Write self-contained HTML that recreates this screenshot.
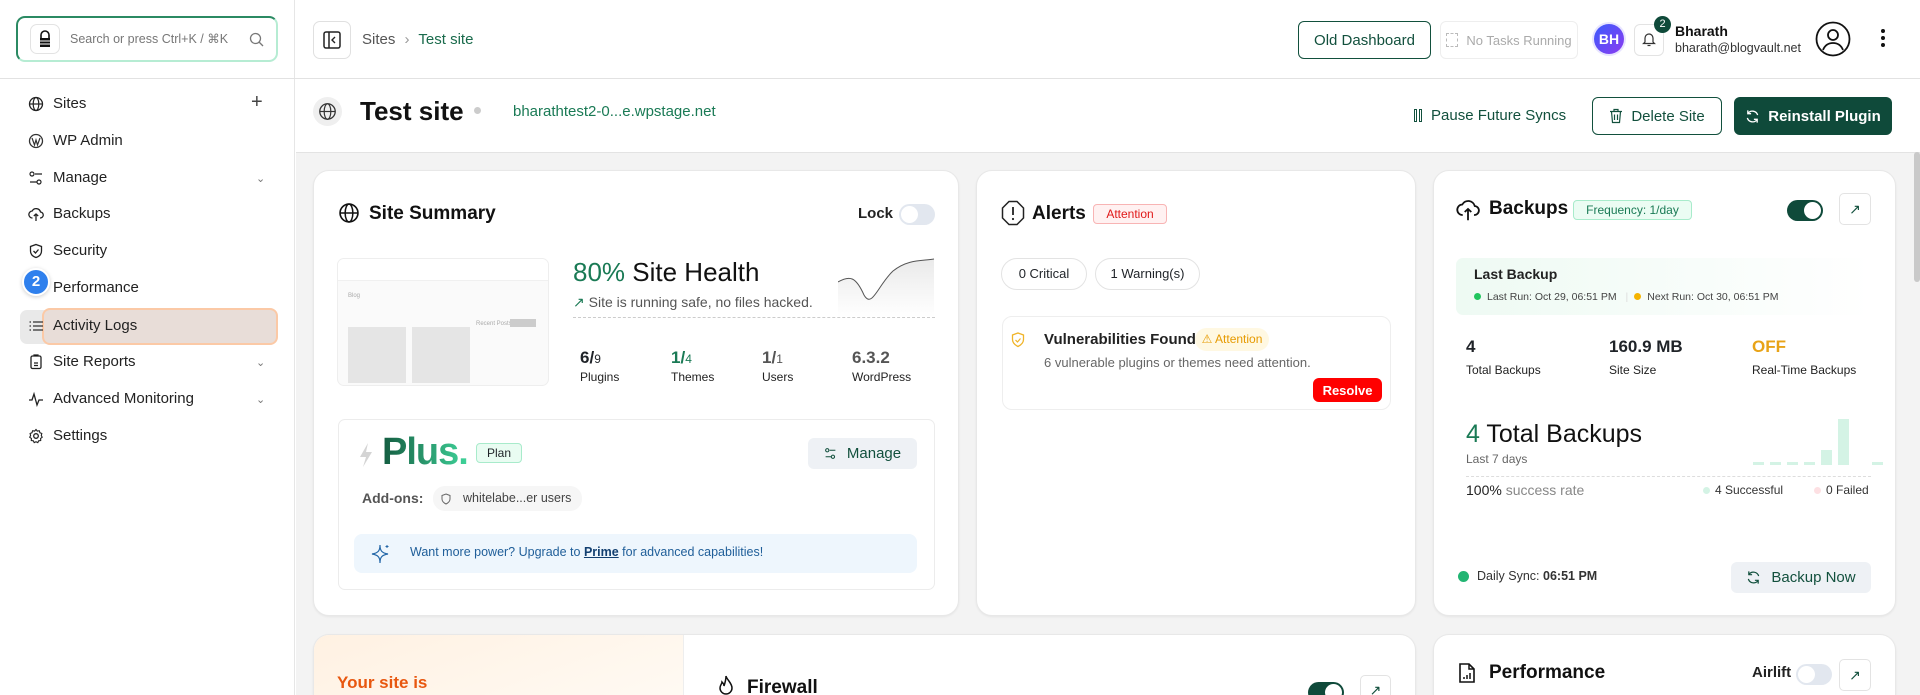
<!DOCTYPE html>
<html><head><meta charset="utf-8"><style>
*{box-sizing:border-box;margin:0;padding:0}
html,body{width:1920px;height:695px;overflow:hidden}
body{font-family:"Liberation Sans",sans-serif;color:#1f2328;background:#fff;position:relative}
.a{position:absolute}
svg{display:block}
.side{left:0;top:0;width:295px;height:695px;border-right:1px solid #e6e6e6;background:#fff}
.nav{position:absolute;left:28px;font-size:15px;color:#222;display:flex;align-items:center;gap:9px}
.nav svg{width:16px;height:16px}
.chev{position:absolute;left:256px;font-size:11px;color:#777}
.card{position:absolute;background:#fff;border:1px solid #e8e8e8;border-radius:16px;box-shadow:0 1px 2px rgba(0,0,0,.06)}
.btn{position:absolute;display:flex;align-items:center;justify-content:center;border-radius:6px;font-size:15px}
.tog{position:absolute;border-radius:12px}
.tog i{position:absolute;top:3px;width:16px;height:16px;border-radius:50%;background:#fff}
.lab{font-size:12px;color:#222}
</style></head><body>

<div class="a side"></div>
<div class="a" style="left:16px;top:16px;width:262px;height:46px;border-radius:9px;border:2px solid;border-color:#2b8a63 #b6ecd3 #b6ecd3 #2b8a63;background:#fff"></div>
<div class="a" style="left:30px;top:24px;width:30px;height:30px;border:1px solid #e3e3e3;border-radius:7px;background:#fff"></div>
<svg class="a" style="left:37px;top:30px" width="16" height="18" viewBox="0 0 16 18"><path d="M4 8V5a4 4 0 018 0v3" fill="none" stroke="#111" stroke-width="1.6"/><rect x="3" y="8" width="10" height="9" fill="#111"/><path d="M3 11h10M3 14h10" stroke="#fff" stroke-width="1"/></svg>
<div class="a" style="left:70px;top:31px;font-size:12.5px;color:#777">Search or press Ctrl+K / ⌘K</div>
<svg class="a" style="left:249px;top:32px" width="15" height="15" viewBox="0 0 15 15"><circle cx="6.5" cy="6.5" r="5" fill="none" stroke="#777" stroke-width="1.3"/><path d="M10 10l4 4" stroke="#777" stroke-width="1.3"/></svg>
<div class="a" style="left:0;top:78px;width:295px;height:1px;background:#e2e2e2"></div>

<div class="nav" style="top:95px"><svg viewBox="0 0 16 16"><circle cx="8" cy="8" r="6.5" fill="none" stroke="#222" stroke-width="1.3"/><ellipse cx="8" cy="8" rx="2.8" ry="6.5" fill="none" stroke="#222" stroke-width="1.2"/><path d="M1.5 8h13" stroke="#222" stroke-width="1.2"/></svg>Sites</div>
<div class="a" style="left:251px;top:91px;font-size:20px;color:#444">+</div>
<div class="nav" style="top:132px"><svg viewBox="0 0 16 16"><circle cx="8" cy="8" r="6.5" fill="none" stroke="#333" stroke-width="1.3"/><path d="M4 5l2.5 7L8 7l1.5 5L12 5" fill="none" stroke="#333" stroke-width="1.2"/></svg>WP Admin</div>
<div class="nav" style="top:169px"><svg viewBox="0 0 16 16"><circle cx="4" cy="4" r="2" fill="none" stroke="#222" stroke-width="1.2"/><circle cx="11" cy="12" r="2" fill="none" stroke="#222" stroke-width="1.2"/><path d="M7 4h7M2 12h7" stroke="#222" stroke-width="1.2"/></svg>Manage</div>
<div class="chev" style="top:172px">⌄</div>
<div class="nav" style="top:205px"><svg viewBox="0 0 16 16"><path d="M4.5 12a3.5 3.5 0 01-.3-7A4.5 4.5 0 0112.5 6a3 3 0 01-.5 6" fill="none" stroke="#222" stroke-width="1.3"/><path d="M8 8v7M5.8 10L8 8l2.2 2" fill="none" stroke="#222" stroke-width="1.3"/></svg>Backups</div>
<div class="nav" style="top:242px"><svg viewBox="0 0 16 16"><path d="M8 1.5l5.5 2v4.5c0 3.5-2.5 5.5-5.5 6.5C5 13.5 2.5 11.5 2.5 8V3.5z" fill="none" stroke="#222" stroke-width="1.3"/><path d="M5.5 8l2 2 3-3.5" fill="none" stroke="#222" stroke-width="1.3"/></svg>Security</div>
<div class="nav" style="top:279px"><svg viewBox="0 0 16 16"></svg>Performance</div>
<div class="a" style="left:20px;top:310px;width:256px;height:34px;border-radius:7px;background:#e9e9e9"></div>
<div class="a" style="left:42px;top:308px;width:236px;height:37px;border-radius:8px;border:2px solid #fbc9a6;background:#e8ddd8"></div>
<div class="nav" style="top:317px"><svg viewBox="0 0 16 16"><path d="M5 4h10M5 8h10M5 12h10" stroke="#333" stroke-width="1.3"/><path d="M1.5 4h1.5M1.5 8h1.5M1.5 12h1.5" stroke="#333" stroke-width="1.3"/></svg>Activity Logs</div>
<div class="a" style="left:22px;top:268px;width:28px;height:28px;border-radius:50%;background:#2f80ed;color:#fff;font-size:15px;font-weight:bold;text-align:center;line-height:24px;border:2px solid #fff;box-shadow:0 1px 4px rgba(0,0,0,.2)">2</div>
<div class="nav" style="top:353px"><svg viewBox="0 0 16 16"><rect x="3" y="2" width="10" height="12.5" rx="1.5" fill="none" stroke="#222" stroke-width="1.3"/><path d="M6 2V1h4v1M6 9h4M6 11.5h4" stroke="#222" stroke-width="1.2"/></svg>Site Reports</div>
<div class="chev" style="top:356px">⌄</div>
<div class="nav" style="top:390px"><svg viewBox="0 0 16 16"><path d="M1 9h3l2-6 3 11 2-5h4" fill="none" stroke="#222" stroke-width="1.3"/></svg>Advanced Monitoring</div>
<div class="chev" style="top:393px">⌄</div>
<div class="nav" style="top:427px"><svg viewBox="0 0 16 16"><circle cx="8" cy="8" r="2.3" fill="none" stroke="#222" stroke-width="1.3"/><path d="M8 1.5l1.3 1.6 2-.4.6 2 1.9.8-.5 2 .9 1.7-1.6 1.3.1 2-2 .3-.9 1.8-1.8-.9-1.8.9-.9-1.8-2-.3.1-2L1.7 9.2l.9-1.7-.5-2 1.9-.8.6-2 2 .4z" fill="none" stroke="#222" stroke-width="1.1"/></svg>Settings</div>

<div class="a" style="left:295px;top:78px;width:1625px;height:1px;background:#e2e2e2"></div>
<div class="a" style="left:313px;top:21px;width:38px;height:38px;border:1px solid #e0e0e0;border-radius:7px;background:#fff"></div>
<svg class="a" style="left:323px;top:31px" width="18" height="18" viewBox="0 0 18 18"><rect x="1" y="1" width="16" height="16" rx="2" fill="none" stroke="#222" stroke-width="1.5"/><path d="M6 1v16" stroke="#222" stroke-width="1.5"/><path d="M12 6l-3 3 3 3" fill="none" stroke="#222" stroke-width="1.4"/></svg>
<div class="a" style="left:362px;top:31px;font-size:15px;color:#555">Sites <span style="color:#999;margin:0 5px">›</span> <span style="color:#1a6b4c">Test site</span></div>

<div class="btn" style="left:1298px;top:21px;width:133px;height:38px;border:1.5px solid #12503d;color:#12503d">Old Dashboard</div>
<div class="btn" style="left:1440px;top:21px;width:138px;height:38px;border:1px solid #eee;color:#aaa;font-size:13px;gap:8px"><span style="width:12px;height:14px;border:1px dashed #bbb;display:inline-block"></span>No Tasks Running</div>
<div class="a" style="left:1594px;top:24px;width:30px;height:30px;border-radius:50%;background:linear-gradient(135deg,#3b5bfd,#8b3cf0);color:#fff;font-size:14px;font-weight:bold;text-align:center;line-height:30px;box-shadow:0 0 0 2px #e7e4ff">BH</div>
<div class="a" style="left:1634px;top:24px;width:30px;height:32px;border:1px solid #e3e3e3;border-radius:6px"></div>
<svg class="a" style="left:1642px;top:31px" width="14" height="16" viewBox="0 0 14 16"><path d="M3 11V7a4 4 0 018 0v4l1.5 1.5h-11z" fill="none" stroke="#333" stroke-width="1.2"/><path d="M5.5 14.5h3" stroke="#333" stroke-width="1.2"/></svg>
<div class="a" style="left:1654px;top:16px;width:17px;height:17px;border-radius:50%;background:#0f4a3a;color:#fff;font-size:11px;text-align:center;line-height:17px">2</div>
<div class="a" style="left:1675px;top:23px;font-size:14px;font-weight:bold;color:#111">Bharath</div>
<div class="a" style="left:1675px;top:41px;font-size:12.5px;color:#333">bharath@blogvault.net</div>
<svg class="a" style="left:1815px;top:21px" width="36" height="36" viewBox="0 0 36 36"><circle cx="18" cy="18" r="16.5" fill="none" stroke="#111" stroke-width="1.8"/><circle cx="18" cy="14" r="5" fill="none" stroke="#111" stroke-width="1.8"/><path d="M8 29c2-5 6-7 10-7s8 2 10 7" fill="none" stroke="#111" stroke-width="1.8"/></svg>
<div class="a" style="left:1881px;top:29px;width:4px;height:4px;border-radius:50%;background:#111;box-shadow:0 7px 0 #111,0 14px 0 #111"></div>

<div class="a" style="left:313px;top:97px;width:29px;height:29px;border-radius:50%;background:#efefef"></div>
<svg class="a" style="left:318px;top:102px" width="19" height="19" viewBox="0 0 16 16"><circle cx="8" cy="8" r="6.5" fill="none" stroke="#333" stroke-width="1.1"/><ellipse cx="8" cy="8" rx="2.8" ry="6.5" fill="none" stroke="#333" stroke-width="1"/><path d="M1.5 8h13" stroke="#333" stroke-width="1"/></svg>
<div class="a" style="left:360px;top:96px;font-size:26px;font-weight:bold;color:#111">Test site</div>
<div class="a" style="left:474px;top:107px;width:7px;height:7px;border-radius:50%;background:#ccc"></div>
<div class="a" style="left:513px;top:103px;font-size:15px;color:#1a7a55">bharathtest2-0...e.wpstage.net</div>
<div class="a" style="left:1414px;top:109px;width:3px;height:13px;border:1px solid #12503d"></div>
<div class="a" style="left:1419px;top:109px;width:3px;height:13px;border:1px solid #12503d"></div>
<div class="a" style="left:1431px;top:107px;font-size:15px;color:#12503d">Pause Future Syncs</div>
<div class="btn" style="left:1592px;top:97px;width:130px;height:38px;border:1.5px solid #12503d;color:#12503d;gap:8px"><svg width="14" height="16" viewBox="0 0 14 16"><path d="M1 3.5h12M5 3.5V1.5h4v2M2.5 3.5l1 11h7l1-11M5.5 6.5v5.5M8.5 6.5v5.5" fill="none" stroke="#12503d" stroke-width="1.2"/></svg>Delete Site</div>
<div class="btn" style="left:1734px;top:97px;width:158px;height:38px;background:#0f4a3a;color:#fff;font-weight:bold;gap:8px"><svg width="15" height="15" viewBox="0 0 16 16"><path d="M13.5 6.5A5.8 5.8 0 003 5M2.5 9.5A5.8 5.8 0 0013 11" fill="none" stroke="#fff" stroke-width="1.4"/><path d="M3 1.5V5h3.5M13 14.5V11H9.5" fill="none" stroke="#fff" stroke-width="1.4"/></svg>Reinstall Plugin</div>

<div class="a" style="left:296px;top:152px;width:1624px;height:543px;background:#f3f3f3;border-top:1px solid #e3e3e3"></div>
<div class="a" style="left:1914px;top:152px;width:6px;height:130px;background:#c9c9c9;border-radius:3px"></div>

<div class="card" style="left:313px;top:170px;width:646px;height:446px"></div>
<svg class="a" style="left:338px;top:202px" width="22" height="22" viewBox="0 0 16 16"><circle cx="8" cy="8" r="6.5" fill="none" stroke="#111" stroke-width="1.2"/><ellipse cx="8" cy="8" rx="2.8" ry="6.5" fill="none" stroke="#111" stroke-width="1.1"/><path d="M1.5 8h13" stroke="#111" stroke-width="1.1"/></svg>
<div class="a" style="left:369px;top:203px;font-size:19px;font-weight:bold;color:#111">Site Summary</div>
<div class="a" style="left:858px;top:205px;font-size:15px;font-weight:bold;color:#222">Lock</div>
<div class="tog" style="left:899px;top:204px;width:36px;height:21px;background:#e2e7ef;border-radius:11px"><i style="left:2px;top:2px;width:17px;height:17px"></i></div>
<div class="a" style="left:337px;top:258px;width:212px;height:128px;border:1px solid #eee;border-radius:7px;background:#fafafa;overflow:hidden">
 <div style="height:22px;background:#fff;border-bottom:1px solid #f0f0f0"></div>
 <div style="position:absolute;left:10px;top:34px;font-size:6px;color:#aaa">Blog</div>
 <div style="position:absolute;left:10px;top:68px;width:58px;height:56px;background:#e5e5e5"></div>
 <div style="position:absolute;left:74px;top:68px;width:58px;height:56px;background:#e5e5e5"></div>
 <div style="position:absolute;left:138px;top:62px;font-size:6px;color:#aaa;width:70px">Recent Posts</div>
 <div style="position:absolute;left:172px;top:60px;width:26px;height:8px;background:#ccc"></div>
</div>
<div class="a" style="left:573px;top:257px;font-size:26px;color:#111"><span style="color:#1a7a55">80%</span> Site Health</div>
<div class="a" style="left:573px;top:294px;font-size:14px;color:#555"><span style="color:#1a7a55">↗</span> Site is running safe, no files hacked.</div>
<svg class="a" style="left:838px;top:257px" width="97" height="60" viewBox="0 0 97 60"><defs><linearGradient id="g1" x1="0" y1="0" x2="0" y2="1"><stop offset="0" stop-color="#eaeaea"/><stop offset="1" stop-color="#fff"/></linearGradient></defs><path d="M0 25C12 18 18 20 26 38C34 52 40 28 55 14C70 2 84 4 96 2V60H0z" fill="url(#g1)"/><path d="M0 25C12 18 18 20 26 38C34 52 40 28 55 14C70 2 84 4 96 2" fill="none" stroke="#555" stroke-width="1"/></svg>
<div class="a" style="left:573px;top:317px;width:362px;border-top:1px dashed #ccc"></div>
<div class="a" style="left:580px;top:348px;font-size:17px;font-weight:bold">6/<span style="font-size:12px;font-weight:normal">9</span></div>
<div class="a" style="left:580px;top:368px"><span class="lab">Plugins</span></div>
<div class="a" style="left:671px;top:348px;font-size:17px;font-weight:bold;color:#1a7a55">1/<span style="font-size:12px;font-weight:normal">4</span></div>
<div class="a" style="left:671px;top:368px"><span class="lab">Themes</span></div>
<div class="a" style="left:762px;top:348px;font-size:17px;font-weight:bold;color:#555">1/<span style="font-size:12px;font-weight:normal">1</span></div>
<div class="a" style="left:762px;top:368px"><span class="lab">Users</span></div>
<div class="a" style="left:852px;top:348px;font-size:17px;font-weight:bold;color:#555">6.3.2</div>
<div class="a" style="left:852px;top:368px"><span class="lab">WordPress</span></div>

<div class="a" style="left:338px;top:419px;width:597px;height:171px;border:1px solid #ececec;border-radius:7px"></div>
<svg class="a" style="left:358px;top:442px" width="16" height="26" viewBox="0 0 16 26"><path d="M10 1L2 15h6l-3 10 9-15H8z" fill="#d4d4d4"/></svg>
<div class="a" style="left:382px;top:431px;font-size:38px;font-weight:bold;background:linear-gradient(90deg,#145c40,#3fd49a);-webkit-background-clip:text;color:transparent;letter-spacing:-1px">Plus.</div>
<div class="a" style="left:476px;top:443px;width:46px;height:20px;border:1px solid #a8ebcb;background:#e9fcf2;border-radius:4px;font-size:12px;text-align:center;line-height:18px">Plan</div>
<div class="btn" style="left:808px;top:438px;width:109px;height:31px;background:#eef1f5;color:#12503d;gap:10px"><svg width="13" height="13" viewBox="0 0 16 16"><circle cx="4" cy="4" r="2" fill="none" stroke="#12503d" stroke-width="1.3"/><circle cx="11" cy="12" r="2" fill="none" stroke="#12503d" stroke-width="1.3"/><path d="M7 4h7M2 12h7" stroke="#12503d" stroke-width="1.3"/></svg>Manage</div>
<div class="a" style="left:362px;top:490px;font-size:14px;font-weight:bold;color:#555">Add-ons:</div>
<div class="a" style="left:433px;top:486px;width:149px;height:25px;background:#f6f6f6;border-radius:12px;font-size:12.5px;color:#444;line-height:25px;padding-left:30px">whitelabe...er users</div>
<svg class="a" style="left:441px;top:493px" width="10" height="12" viewBox="0 0 10 12"><path d="M5 1l4 1.5v3.5c0 2.5-2 4-4 5C3 10 1 8.5 1 6V2.5z" fill="none" stroke="#666"/></svg>
<div class="a" style="left:354px;top:534px;width:563px;height:39px;background:#eef6fd;border-radius:8px"></div>
<svg class="a" style="left:370px;top:543px" width="22" height="22" viewBox="0 0 22 22"><path d="M10 2C10 8 8 10 2 11c6 1 8 3 8 9 0-6 2-8 8-9-6-1-8-3-8-9z" fill="none" stroke="#2467a8" stroke-width="1.2"/><path d="M17 2v3M15.5 3.5h3" stroke="#2467a8"/></svg>
<div class="a" style="left:410px;top:545px;font-size:12.5px;color:#1f5e99">Want more power? Upgrade to <b style="text-decoration:underline;color:#123f70">Prime</b> for advanced capabilities!</div>

<div class="card" style="left:976px;top:170px;width:440px;height:446px"></div>
<svg class="a" style="left:1001px;top:200px" width="24" height="26" viewBox="0 0 24 26"><path d="M8 1.5h8l6.5 6.5v10L16 24.5H8L1.5 18V8z" fill="none" stroke="#222" stroke-width="1.5"/><path d="M12 7v8" stroke="#222" stroke-width="1.8"/><circle cx="12" cy="19" r="1.1" fill="#222"/></svg>
<div class="a" style="left:1032px;top:203px;font-size:19px;font-weight:bold;color:#111">Alerts</div>
<div class="a" style="left:1093px;top:204px;width:74px;height:20px;border:1px solid #f8b4b4;background:#fff1f1;border-radius:4px;font-size:12px;color:#e01919;text-align:center;line-height:18px">Attention</div>
<div class="a" style="left:1001px;top:258px;width:86px;height:32px;border:1px solid #e3e3e3;border-radius:16px;font-size:13px;text-align:center;line-height:30px">0 Critical</div>
<div class="a" style="left:1095px;top:258px;width:105px;height:32px;border:1px solid #e3e3e3;border-radius:16px;font-size:13px;text-align:center;line-height:30px">1 Warning(s)</div>
<div class="a" style="left:1002px;top:316px;width:389px;height:94px;border:1px solid #eee;border-radius:10px"></div>
<svg class="a" style="left:1011px;top:332px" width="14" height="16" viewBox="0 0 14 16"><path d="M7 1l5.5 2v4.5c0 3.5-2.5 5.5-5.5 7C4 13 1.5 11 1.5 7.5V3z" fill="none" stroke="#f0b429" stroke-width="1.3"/><path d="M4.5 8l2 2 3-3.5" fill="none" stroke="#f0b429" stroke-width="1.2"/></svg>
<div class="a" style="left:1044px;top:331px;font-size:15px;font-weight:bold;color:#222">Vulnerabilities Found</div>
<div class="a" style="left:1195px;top:328px;width:74px;height:23px;background:#fff8e2;border-radius:12px;font-size:12px;color:#e69a00;text-align:center;line-height:23px">⚠ Attention</div>
<div class="a" style="left:1044px;top:355px;font-size:13px;color:#666">6 vulnerable plugins or themes need attention.</div>
<div class="btn" style="left:1313px;top:378px;width:69px;height:24px;background:#f00;color:#fff;font-size:13px;font-weight:bold">Resolve</div>

<div class="card" style="left:1433px;top:170px;width:463px;height:446px"></div>
<svg class="a" style="left:1456px;top:197px" width="24" height="24" viewBox="0 0 16 16"><path d="M4.5 12a3.5 3.5 0 01-.3-7A4.5 4.5 0 0112.5 6a3 3 0 01-.5 6" fill="none" stroke="#111" stroke-width="1.2"/><path d="M8 8v7.5M5.8 10L8 8l2.2 2" fill="none" stroke="#111" stroke-width="1.2"/></svg>
<div class="a" style="left:1489px;top:198px;font-size:19px;font-weight:bold;color:#111">Backups</div>
<div class="a" style="left:1573px;top:200px;width:119px;height:20px;border:1px solid #a8ebcb;background:#ebfcf3;border-radius:4px;font-size:12px;color:#1a7a55;text-align:center;line-height:18px">Frequency: 1/day</div>
<div class="tog" style="left:1787px;top:200px;width:36px;height:21px;background:#0f4a3a;border-radius:11px"><i style="left:17px;top:2px;width:17px;height:17px"></i></div>
<div class="a" style="left:1839px;top:193px;width:32px;height:32px;border:1px solid #e3e3e3;border-radius:5px;font-size:14px;color:#12503d;text-align:center;line-height:30px">↗</div>
<div class="a" style="left:1456px;top:258px;width:415px;height:57px;border-radius:7px;background:linear-gradient(90deg,#eefaf3,#fff)"></div>
<div class="a" style="left:1474px;top:266px;font-size:14px;font-weight:bold;color:#222">Last Backup</div>
<div class="a" style="left:1474px;top:291px;font-size:10.5px;color:#444;white-space:nowrap"><span style="display:inline-block;width:7px;height:7px;border-radius:50%;background:#22c55e;margin-right:6px"></span>Last Run: Oct 29, 06:51 PM <span style="color:#ddd;margin:0 6px">|</span><span style="display:inline-block;width:7px;height:7px;border-radius:50%;background:#f5b400;margin-right:6px"></span>Next Run: Oct 30, 06:51 PM</div>
<div class="a" style="left:1466px;top:337px;font-size:17px;font-weight:bold">4</div>
<div class="a" style="left:1466px;top:361px"><span class="lab">Total Backups</span></div>
<div class="a" style="left:1609px;top:337px;font-size:17px;font-weight:bold">160.9 MB</div>
<div class="a" style="left:1609px;top:361px"><span class="lab">Site Size</span></div>
<div class="a" style="left:1752px;top:337px;font-size:17px;font-weight:bold;color:#e8a317">OFF</div>
<div class="a" style="left:1752px;top:361px"><span class="lab">Real-Time Backups</span></div>
<div class="a" style="left:1466px;top:420px;font-size:25px;color:#111"><span style="color:#1a7a55">4</span> Total Backups</div>
<div class="a" style="left:1466px;top:452px;font-size:12px;color:#666">Last 7 days</div>
<div class="a" style="left:1753px;top:462px;width:11px;height:3px;background:#d4f3e5;box-shadow:17px 0 #d4f3e5,34px 0 #d4f3e5,51px 0 #d4f3e5,119px 0 #d4f3e5"></div>
<div class="a" style="left:1821px;top:450px;width:11px;height:15px;background:#d4f3e5"></div>
<div class="a" style="left:1838px;top:419px;width:11px;height:46px;background:#d4f3e5"></div>
<div class="a" style="left:1466px;top:476px;width:405px;border-top:1px dashed #ddd"></div>
<div class="a" style="left:1466px;top:482px;font-size:14px;color:#888"><b style="color:#222;font-weight:normal">100%</b> success rate</div>
<div class="a" style="left:1703px;top:483px;font-size:12px;color:#333"><span style="display:inline-block;width:7px;height:7px;border-radius:50%;background:#d4f3e5;margin-right:5px"></span>4 Successful</div>
<div class="a" style="left:1814px;top:483px;font-size:12px;color:#333"><span style="display:inline-block;width:7px;height:7px;border-radius:50%;background:#fde0e3;margin-right:5px"></span>0 Failed</div>
<div class="a" style="left:1458px;top:571px;width:11px;height:11px;border-radius:50%;background:#22b573"></div>
<div class="a" style="left:1477px;top:569px;font-size:12.5px;color:#333">Daily Sync: <b>06:51 PM</b></div>
<div class="btn" style="left:1731px;top:562px;width:140px;height:31px;background:#eef1f5;color:#12503d;gap:10px"><svg width="15" height="15" viewBox="0 0 16 16"><path d="M13.5 6.5A5.8 5.8 0 003 5M2.5 9.5A5.8 5.8 0 0013 11" fill="none" stroke="#12503d" stroke-width="1.3"/><path d="M3 1.5V5h3.5M13 14.5V11H9.5" fill="none" stroke="#12503d" stroke-width="1.3"/></svg>Backup Now</div>

<div class="card" style="left:313px;top:634px;width:1103px;height:61px;overflow:hidden;border-bottom:none;border-radius:16px 16px 0 0"><div style="position:absolute;left:0;top:0;width:370px;height:61px;background:linear-gradient(160deg,#fff1e2,#fffaf3);border-right:1px solid #eee"></div></div>
<div class="a" style="left:337px;top:673px;font-size:17px;font-weight:bold;color:#e8570f">Your site is</div>
<svg class="a" style="left:717px;top:675px" width="18" height="22" viewBox="0 0 18 22"><path d="M9 1c1 4 6 7 6 12a6 6 0 01-12 0c0-3 2-4 2-6 2 2 2 3 2 4 1-3 2-6 2-10z" fill="none" stroke="#111" stroke-width="1.5"/></svg>
<div class="a" style="left:747px;top:677px;font-size:19px;font-weight:bold;color:#111">Firewall</div>
<div class="tog" style="left:1308px;top:682px;width:36px;height:21px;background:#0f4a3a;border-radius:11px"><i style="left:17px;top:2px;width:17px;height:17px"></i></div>
<div class="a" style="left:1360px;top:675px;width:31px;height:31px;border:1px solid #e3e3e3;border-radius:5px;font-size:14px;color:#12503d;text-align:center;line-height:29px">↗</div>
<div class="card" style="left:1433px;top:634px;width:463px;height:61px;border-bottom:none;border-radius:16px 16px 0 0"></div>
<svg class="a" style="left:1458px;top:662px" width="18" height="22" viewBox="0 0 18 22"><path d="M2 2h9l5 5v13H2z" fill="none" stroke="#111" stroke-width="1.6"/><path d="M11 2v5h5M6 17v-2M9 17v-4M12 17v-6" stroke="#111" stroke-width="1.5" fill="none"/></svg>
<div class="a" style="left:1489px;top:662px;font-size:19px;font-weight:bold;color:#111">Performance</div>
<div class="a" style="left:1752px;top:664px;font-size:15px;font-weight:bold;color:#222">Airlift</div>
<div class="tog" style="left:1796px;top:664px;width:36px;height:21px;background:#e2e7ef;border-radius:11px"><i style="left:2px;top:2px;width:17px;height:17px"></i></div>
<div class="a" style="left:1839px;top:659px;width:32px;height:32px;border:1px solid #e3e3e3;border-radius:5px;font-size:14px;color:#12503d;text-align:center;line-height:30px">↗</div>
</body></html>
